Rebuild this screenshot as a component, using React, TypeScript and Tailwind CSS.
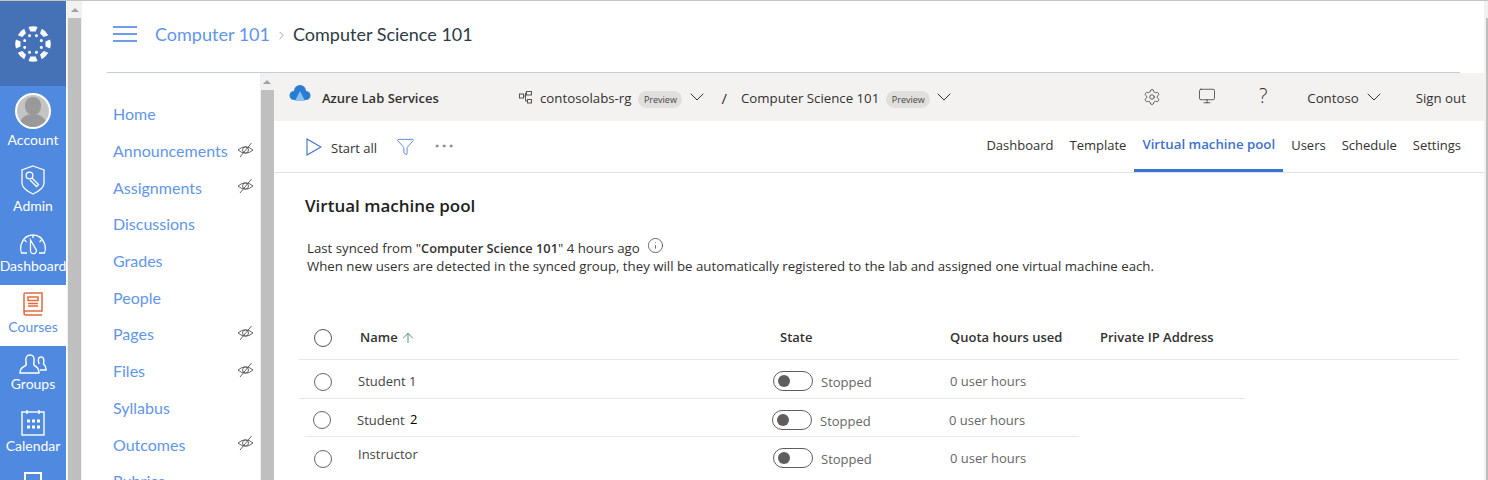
import React from 'react';
import { ChevronDown, ChevronRight, Ellipsis, Filter, Info, Monitor, Settings, ArrowUp } from 'lucide-react';

const segoe = { fontFamily: '"Open Sans", "Noto Sans", sans-serif' };

function CanvasLogo() {
  const big = [0, 45, 90, 135, 180, 225, 270, 315];
  return (
    <svg width="36" height="36" viewBox="-18 -18 36 36" fill="#fff">
      {big.map((a) => (
        <path key={a} d="M-4.5 -17 Q0 -18.5 4.5 -17 L2.6 -12.5 L-2.6 -12.5 Z" transform={`rotate(${a})`} />
      ))}
      {big.map((a) => (
        <circle key={a} cx="0" cy="-9" r="1.5" transform={`rotate(${a + 22.5})`} />
      ))}
    </svg>
  );
}

function HiddenEye() {
  return (
    <svg width="17" height="16" viewBox="0 0 17 16" fill="none" stroke="#555" strokeWidth="0.9" className="-mt-[3px]">
      <path d="M1 8 Q8.5 1.5 16 8 Q8.5 14.5 1 8 Z" />
      <circle cx="8.5" cy="8" r="3" />
      <path d="M14.5 1 L3 15" />
    </svg>
  );
}

function NavItem({ label, icon, active }: { label: string; icon: React.ReactNode; active?: boolean }) {
  return (
    <div className={`flex flex-col items-center ${active ? 'bg-white text-[#5b8fe3]' : 'text-white'}`}>
      {icon}
      <span className="text-[14px] leading-[18px] whitespace-nowrap">{label}</span>
    </div>
  );
}

function CourseLink({ label, hidden }: { label: string; hidden?: boolean }) {
  return (
    <div className="flex items-center justify-between h-[36.7px] pl-[6px] pr-[6px]">
      <span className="text-[16px] text-[#5f96ea]">{label}</span>
      {hidden && <HiddenEye />}
    </div>
  );
}

function Preview() {
  return <span className="rounded-full bg-[#e1dfdd] w-[44px] text-center h-[17px] leading-[17px] text-[9px] text-[#444]">Preview</span>;
}

function Toggle() {
  return (
    <span className="flex shrink-0 items-center w-[40px] h-[20px] -mt-[2px] rounded-full border border-[#605e5c] pl-[4px]">
      <span className="w-[12px] h-[12px] rounded-full bg-[#605e5c]" />
    </span>
  );
}

function Radio({ dark }: { dark?: boolean }) {
  return <span className={`block w-[18px] h-[18px] rounded-full border ${dark ? 'border-[#555]' : 'border-[#666]'}`} />;
}

function Scrollbar({ width }: { width: string }) {
  return (
    <div className={`${width} shrink-0 bg-[#f1f1f1] flex flex-col items-center`}>
      <div className="h-[17px] flex items-center">
        <span className="border-x-[4px] border-x-transparent border-b-[4px] border-b-[#a3a3a3]" />
      </div>
      <div className="w-[13px] flex-1 bg-[#bfbfbf]" />
    </div>
  );
}

export default function App() {
  return (
    <div className="h-[480px] w-[1488px] overflow-hidden flex border-t border-[#c4c4c4] bg-white" style={{ fontFamily: 'Lato, sans-serif' }}>
      {/* global nav */}
      <div className="w-[66px] shrink-0 bg-[#5089e0]">
        <div className="h-[85px] bg-[#4572b6] flex items-center justify-center">
          <CanvasLogo />
        </div>
        <div className="flex flex-col pt-[7px]">
          <NavItem
            label="Account"
            icon={
              <span className="mb-[2px] w-[36px] h-[36px] rounded-full border-2 border-white bg-[#c4c4c4] overflow-hidden flex flex-col items-center">
                <span className="mt-[2px] w-[16px] h-[19px] rounded-full bg-[#999]" />
                <span className="w-[28px] h-[14px] rounded-t-full bg-[#999] -mt-[1px]" />
              </span>
            }
          />
          <div className="h-[16px]" />
          <NavItem
            label="Admin"
            icon={
              <svg width="24" height="30" viewBox="0 0 24 30" fill="none" stroke="#fff" strokeWidth="1.3" className="mb-[2px]">
                <path d="M12 1 L23 5 V18 Q23 24 12 29 Q1 24 1 18 V5 Z" />
                <circle cx="8.5" cy="10.5" r="3.4" />
                <path d="M11 13 L17.5 19.5 L15.5 21.5 L9 15" />
              </svg>
            }
          />
          <div className="h-[18px]" />
          <NavItem
            label="Dashboard"
            icon={
              <svg width="28" height="22" viewBox="0 0 28 22" fill="none" stroke="#fff" strokeWidth="1.3" className="mb-[2px]">
                <path d="M8 20 H2.5 Q1 17 2 12 Q5 2 14 2 Q23 2 26 12 Q27 17 25.5 20 H20" />
                <path d="M11.5 7 L16.5 15.5 A3 3 0 1 1 11.5 17 Z" />
                <path d="M14 2 V5 M5.5 7 L7.5 9 M22.5 7 L20.5 9" />
              </svg>
            }
          />
          <div className="h-[10px]" />
          <div className="bg-white pt-[7px] pb-[10px]">
            <NavItem
              label="Courses"
              active
              icon={
                <svg width="20" height="25" viewBox="0 0 20 25" fill="none" stroke="#e66a3e" strokeWidth="1.5" className="mb-[1px]">
                  <path d="M1 20 V2 Q1 1 2 1 H19 V19 H3 Q1 19 1 21 Q1 23 3 23 H19" />
                  <rect x="5" y="5" width="10" height="3.5" />
                  <path d="M5 11.5 H15 M5 14 H15" />
                </svg>
              }
            />
          </div>
          <div className="h-[8px]" />
          <NavItem
            label="Groups"
            icon={
              <svg width="28" height="21" viewBox="0 0 28 21" fill="none" stroke="#fff" strokeWidth="1.4">
                <path d="M1 19 Q1 14 6 12 Q8 11 7 8 Q6 1 11 1 Q16 1 15 8 Q14 11 16 12 Q20 14 20 19 Z" />
                <path d="M20 10 Q18 3 22 3 Q26 3 24.5 10 Q27 12 27 16 H21" />
              </svg>
            }
          />
          <div className="h-[16px]" />
          <NavItem
            label="Calendar"
            icon={
              <svg width="24" height="27" viewBox="0 0 24 27" fill="none" stroke="#fff" strokeWidth="1.4" className="mb-[1px]">
                <rect x="1" y="3" width="22" height="23" />
                <path d="M6 1 V5 M18 1 V5" />
                <path d="M6 12 H9 M11 12 H14 M16 12 H19 M6 18 H9 M11 18 H14 M16 18 H19" strokeWidth="3" />
              </svg>
            }
          />
          <div className="mt-[17px] mx-auto w-[18px] h-[24px] border-2 border-white" />
        </div>
      </div>

      {/* page scrollbar */}
      <div className="w-[1px] shrink-0" />
      <Scrollbar width="w-[15px]" />

      {/* main */}
      <div className="w-[1402px] shrink-0 pl-[25px] flex flex-col">
        <div className="h-[72px] w-[1353px] shrink-0 border-b border-[#c7cdd1] flex items-center pb-[5px]">
          <div className="ml-[6px] w-[24px] flex flex-col gap-[5px]">
            <span className="h-[2px] bg-[#6f9ce6]" />
            <span className="h-[2px] bg-[#6f9ce6]" />
            <span className="h-[2px] bg-[#6f9ce6]" />
          </div>
          <span className="ml-[18px] text-[18px] text-[#5f96ea]">Computer 101</span>
          <ChevronRight size={13} strokeWidth={1.25} className="ml-[5px] mr-[5px] mt-[2px] text-[#777]" />
          <span className="text-[18px] text-[#2d3b45]">Computer Science 101</span>
        </div>

        <div className="flex flex-1 min-h-0">
          {/* course nav */}
          <div className="w-[153px] shrink-0 pt-[23px]">
            <CourseLink label="Home" />
            <CourseLink label="Announcements" hidden />
            <CourseLink label="Assignments" hidden />
            <CourseLink label="Discussions" />
            <CourseLink label="Grades" />
            <CourseLink label="People" />
            <CourseLink label="Pages" hidden />
            <CourseLink label="Files" hidden />
            <CourseLink label="Syllabus" />
            <CourseLink label="Outcomes" hidden />
            <CourseLink label="Rubrics" />
          </div>

          {/* inner scrollbar */}
          <Scrollbar width="w-[14px]" />

          {/* lab services frame */}
          <div className="w-[1210px] shrink-0 text-[#323130]" style={segoe}>
            <div className="h-[48px] bg-[#f3f2f1] flex items-center pt-[4px] text-[13.25px] whitespace-nowrap">
              <svg width="22" height="18" viewBox="0 0 22 18" className="ml-[15px] -mt-[10px]">
                <path d="M5 15 A4.5 4.5 0 0 1 5 6 A6 6 0 0 1 17 6 A4.5 4.5 0 0 1 17 15 Z" fill="#2b7cd3" />
                <path d="M11 6 L16 16 H6 Z" fill="#8ac1f2" />
              </svg>
              <span className="ml-[11px] w-[196px] font-semibold text-[13px]">Azure Lab Services</span>
              <svg width="15" height="15" viewBox="0 0 15 15" fill="none" stroke="#555" strokeWidth="1" className="-mt-[4px]">
                <rect x="8.5" y="1.5" width="5" height="3.5" />
                <rect x="9.5" y="9.5" width="4" height="3.5" />
                <rect x="1.5" y="4" width="4" height="4" />
                <path d="M5.5 6 H7.5 V3 H8.5 M7.5 6 V11 H9.5" />
              </svg>
              <span className="ml-[7px]">contosolabs-rg</span>
              <span className="ml-[7px] flex"><Preview /></span>
              <ChevronDown size={24} strokeWidth={1} className="ml-[3px] -mt-[4px]" />
              <span className="ml-[12px] text-[15px] -mt-[2px]">/</span>
              <span className="ml-[14px]">Computer Science 101</span>
              <span className="ml-[7px] flex"><Preview /></span>
              <ChevronDown size={24} strokeWidth={1} className="ml-[2px] -mt-[4px]" />
              <Settings size={18} strokeWidth={1} className="ml-[187px] -mt-[5px]" />
              <Monitor size={18} strokeWidth={1} className="ml-[37px] -mt-[6px]" />
              <span className="ml-[42px] w-[10px] text-[20px] font-light text-center -mt-[6px]">?</span>
              <span className="ml-[39px]">Contoso</span>
              <ChevronDown size={24} strokeWidth={1} className="ml-[3px] -mt-[4px]" />
              <span className="ml-[30px]">Sign out</span>
            </div>

            <div className="h-[52px] border-b border-[#e1e1e1] flex items-stretch text-[13px] whitespace-nowrap">
              <div className="flex items-center ml-[32px]">
                <svg width="16" height="18" viewBox="0 0 16 18" fill="none" stroke="#3b6fd0" strokeWidth="1.1">
                  <path d="M1 1 L15 9 L1 17 Z" />
                </svg>
                <span className="ml-[9px] pt-[4px]">Start all</span>
                <Filter size={19} strokeWidth={1} className="ml-[19px] text-[#3b6fd0]" />
                <Ellipsis size={24} strokeWidth={0.75} className="ml-[17px] -mt-[2px] text-[#555]" />
              </div>
              <div className="ml-auto mr-[23px] flex items-stretch pb-[2px]">
                <span className="flex items-center">Dashboard</span>
                <span className="flex items-center ml-[16px]">Template</span>
                <span className="flex items-center ml-[8px] px-[8px] -mb-[2px] font-semibold text-[13.25px] text-[#3d6fd0] border-b-[3px] border-[#3572d1]">Virtual machine pool</span>
                <span className="flex items-center ml-[8px]">Users</span>
                <span className="flex items-center ml-[16px]">Schedule</span>
                <span className="flex items-center ml-[16px]">Settings</span>
              </div>
            </div>

            <div className="pl-[31px] pt-[22px] text-[17px] font-semibold text-[#201f1e] leading-[22px]">Virtual machine pool</div>

            <div className="pl-[33px] pt-[22px] text-[13.25px] leading-[18px] text-[#323130]">
              <div className="flex items-center">
                <span className="whitespace-pre">Last synced from "</span>
                <b className="font-semibold text-[12.8px]">Computer Science 101</b>
                <span className="whitespace-pre">" 4 hours ago</span>
                <Info size={17} strokeWidth={1} className="ml-[7px] -mt-[5px]" />
              </div>
              <div>When new users are detected in the synced group, they will be automatically registered to the lab and assigned one virtual machine each.</div>
            </div>

            <div className="mt-[42px] ml-[25px]">
              <div className="w-[1160px] h-[43px] border-b border-[#e8e8e8] flex items-center text-[13px] font-semibold text-[#323130]">
                <span className="ml-[15px]"><Radio dark /></span>
                <span className="ml-[28px] w-[420px] flex items-center">
                  Name <ArrowUp size={16} strokeWidth={1.25} className="ml-[2px] text-[#2f8566]" />
                </span>
                <span className="w-[170px]">State</span>
                <span className="w-[150px]">Quota hours used</span>
                <span>Private IP Address</span>
              </div>

              <div className="flex items-center w-[946px] h-[39px] pt-[6px] border-b border-[#e8e8e8]">
                <span className="ml-[15px] -mt-[1px]"><Radio /></span>
                <span className="ml-[26px] w-[415px] text-[13px] text-[#444] whitespace-nowrap">Student 1</span>
                <Toggle />
                <span className="ml-[8px] w-[129px] text-[13px] text-[#666] pt-[2px]">Stopped</span>
                <span className="text-[13px] text-[#666]">0 user hours</span>
              </div>

              <div className="flex items-center ml-[6px] w-[774px] h-[38px] pt-[6px] border-b border-[#e8e8e8]">
                <span className="ml-[8px] -mt-[1px]"><Radio /></span>
                <span className="ml-[26px] w-[415px] text-[13px] text-[#444] whitespace-nowrap">
                  Student <span className="ml-[2px] relative -top-[1px] text-black">2</span>
                </span>
                <Toggle />
                <span className="ml-[8px] w-[129px] text-[13px] text-[#666] pt-[2px]">Stopped</span>
                <span className="text-[13px] text-[#666]">0 user hours</span>
              </div>

              <div className="flex items-center h-[42px] pt-[2px]">
                <span className="ml-[15px] -mt-[1px]"><Radio /></span>
                <span className="ml-[26px] w-[415px] pb-[9px] text-[13px] text-[#444] whitespace-nowrap">Instructor</span>
                <Toggle />
                <span className="ml-[8px] w-[129px] text-[13px] text-[#666] pt-[2px]">Stopped</span>
                <span className="text-[13px] text-[#666]">0 user hours</span>
              </div>
            </div>
          </div>
        </div>
      </div>

      {/* right edge scrollbar, mostly off screen */}
      <div className="w-[4px] shrink-0 bg-[#f1f1f1] flex flex-col items-end">
        <div className="h-[17px]" />
        <div className="w-[2px] flex-1 bg-[#bfbfbf]" />
      </div>
    </div>
  );
}
